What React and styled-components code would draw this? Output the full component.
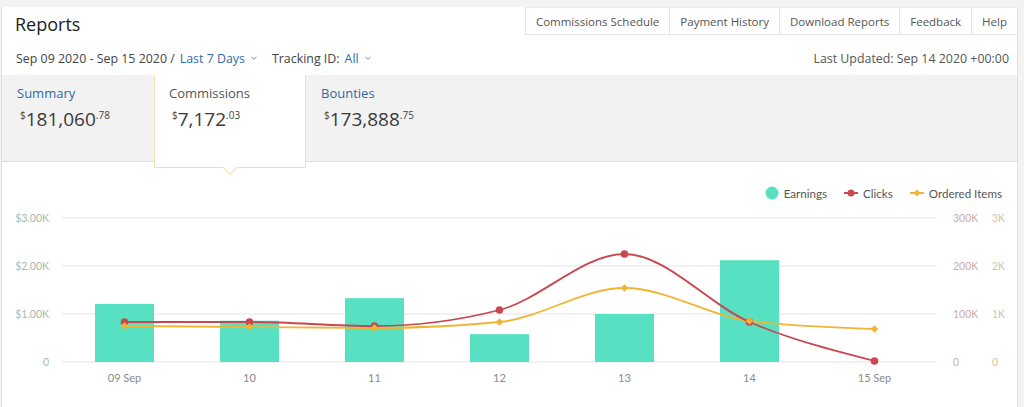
import React from 'react';
import styled, { createGlobalStyle } from 'styled-components';

const GlobalStyle = createGlobalStyle`
  body {
    margin: 0;
    background: #f3f3f3;
    font-family: "Open Sans", "Noto Sans", Arial, sans-serif;
    color: #333;
  }
`;

const Card = styled.div`
  margin: 7px 6px 0 1px;
  background: #fff;
  border-left: 1px solid #e0e0e0;
  border-right: 1px solid #e0e0e0;
  min-height: 400px;
`;

const Header = styled.div`
  display: flex;
  justify-content: space-between;
  align-items: flex-start;
  height: 28px;
`;

const Title = styled.h1`
  margin: 0;
  padding: 5px 0 0 13px;
  font-size: 18px;
  font-weight: 400;
  line-height: 24px;
  color: #222;
`;

const Nav = styled.nav`
  display: flex;
  height: 28px;
`;

const NavItem = styled.div`
  display: flex;
  align-items: center;
  padding: 0 10px;
  font-size: 11.5px;
  color: #555;
  border-left: 1px solid #e3e3e3;
  border-bottom: 1px solid #e3e3e3;
  border-top: 1px solid #ececec;
  white-space: nowrap;
`;

const SubBar = styled.div`
  display: flex;
  justify-content: space-between;
  align-items: center;
  box-sizing: border-box;
  height: 40px;
  padding: 6px 8px 0 14px;
  font-size: 12.4px;
  color: #444;
`;

const Filters = styled.div`
  display: flex;
  align-items: center;
  gap: 14px;
`;

const Filter = styled.span`
  display: inline-flex;
  align-items: center;
  gap: 5px;
`;

const Link = styled.span`
  color: #2f6aa6;
`;

const Updated = styled.span`
  color: #555;
`;

const StatsBand = styled.div`
  display: flex;
  height: 86px;
  background: #f2f2f2;
  border-bottom: 1px solid #dedede;
`;

const StatTab = styled.div`
  position: relative;
  box-sizing: border-box;
  width: 152px;
  padding: 9px 0 0 14px;
  align-self: flex-start;
  height: ${(p) => (p.$active ? '93px' : '86px')};
  background: ${(p) => (p.$active ? '#fff' : 'transparent')};
  border-left: 1px solid ${(p) => (p.$active ? '#f2dfb4' : 'transparent')};
  border-right: 1px solid ${(p) => (p.$active ? '#f2dfb4' : 'transparent')};
  border-bottom: 1px solid ${(p) => (p.$active ? '#f2dfb4' : 'transparent')};
  z-index: ${(p) => (p.$active ? 2 : 0)};

  &::after {
    content: '';
    display: ${(p) => (p.$active ? 'block' : 'none')};
    position: absolute;
    left: 70px;
    bottom: -6px;
    width: 9px;
    height: 9px;
    background: #fff;
    border-right: 1px solid #f2dfb4;
    border-bottom: 1px solid #f2dfb4;
    transform: rotate(45deg);
  }
`;

const StatLabel = styled.div`
  font-size: 13px;
  line-height: 18px;
  color: ${(p) => (p.$active ? '#555' : '#2f6aa6')};
`;

const Amount = styled.div`
  margin: 5px 0 0 3px;
  font-size: 19px;
  line-height: 24px;
  color: #3a3a3a;

  sup {
    font-size: 10px;
    vertical-align: 7px;
    line-height: 0;
    color: #444;
  }
`;

const ChartSection = styled.div`
  padding-top: 24px;
`;

const Legend = styled.div`
  display: flex;
  justify-content: flex-end;
  align-items: center;
  gap: 17px;
  height: 14px;
  padding-right: 15px;
  font-family: Lato, "Open Sans", sans-serif;
  font-size: 11.6px;
  color: #555;
`;

const LegendItem = styled.span`
  display: inline-flex;
  align-items: center;
  gap: 5px;
`;

const Chart = styled.svg`
  display: block;
  margin-top: 5px;
`;

const Chevron = () => (
  <svg width="8" height="6" viewBox="0 0 8 6">
    <path d="M1.5 1.8 L4 4.3 L6.5 1.8" fill="none" stroke="#888" strokeWidth="1" />
  </svg>
);

const TEAL = '#57e0c2';
const RED = '#c9484f';
const YELLOW = '#f0b535';

const xs = [124.5, 249.5, 374.5, 499.5, 624.5, 749.5, 874.5];
const xLabels = ['09 Sep', '10', '11', '12', '13', '14', '15 Sep'];
const earnings = [1.21, 0.86, 1.33, 0.58, 1.0, 2.12, 0];
const clicks = [322, 322, 326, 310, 254, 322, 361];
const items = [326, 327, 328, 322, 288, 321, 329];
const grid = [218, 266, 314, 362];

// monotone-x curve, like d3.curveMonotoneX
function monotonePath(px, py) {
  const n = px.length;
  const sign = (v) => (v < 0 ? -1 : 1);
  const t = new Array(n).fill(0);
  for (let i = 1; i < n - 1; i++) {
    const h0 = px[i] - px[i - 1];
    const h1 = px[i + 1] - px[i];
    const s0 = (py[i] - py[i - 1]) / h0;
    const s1 = (py[i + 1] - py[i]) / h1;
    const p = (s0 * h1 + s1 * h0) / (h0 + h1);
    t[i] = (sign(s0) + sign(s1)) * Math.min(Math.abs(s0), Math.abs(s1), 0.5 * Math.abs(p)) || 0;
  }
  const h0 = px[1] - px[0];
  t[0] = (3 * (py[1] - py[0]) / h0 - t[1]) / 2;
  const hn = px[n - 1] - px[n - 2];
  t[n - 1] = (3 * (py[n - 1] - py[n - 2]) / hn - t[n - 2]) / 2;
  let d = `M${px[0]},${py[0]}`;
  for (let i = 0; i < n - 1; i++) {
    const dx = (px[i + 1] - px[i]) / 3;
    d += ` C${px[i] + dx},${py[i] + dx * t[i]} ${px[i + 1] - dx},${py[i + 1] - dx * t[i + 1]} ${px[i + 1]},${py[i + 1]}`;
  }
  return d;
}

const Diamond = ({ x, y, r }) => (
  <path d={`M${x},${y - r} L${x + r},${y} L${x},${y + r} L${x - r},${y} Z`} fill={YELLOW} />
);

function ReportChart() {
  const leftLabels = ['$3.00K', '$2.00K', '$1.00K', '0'];
  const clickLabels = ['300K', '200K', '100K', '0'];
  const itemLabels = ['3K', '2K', '1K', '0'];
  return (
    <Chart width="1015" height="202" viewBox="2 205 1015 202">
      {grid.map((y) => (
        <line key={y} x1="62" x2="937" y1={y} y2={y} stroke="#e4e4e4" strokeWidth="1" />
      ))}
      <g fontFamily="Lato, 'Open Sans', sans-serif" fontSize="10.5">
        {grid.map((y, i) => (
          <text key={'l' + y} x="49" y={y + 4} textAnchor="end" fill="#a3bbb1">{leftLabels[i]}</text>
        ))}
        {grid.map((y, i) => (
          <text key={'c' + y} x="953" y={y + 4} fill="#c9adab">{clickLabels[i]}</text>
        ))}
        {grid.map((y, i) => (
          <text key={'i' + y} x="992" y={y + 4} fill="#d3c3a4">{itemLabels[i]}</text>
        ))}
        {xs.map((x, i) => (
          <text key={'x' + i} x={x} y="382" textAnchor="middle" fill="#8a8a8a" fontSize="11">{xLabels[i]}</text>
        ))}
      </g>
      {xs.map((x, i) =>
        earnings[i] > 0 ? (
          <rect key={'b' + i} x={x - 29.5} width="59" y={362 - earnings[i] * 48} height={earnings[i] * 48} fill={TEAL} />
        ) : null
      )}
      <path d={monotonePath(xs, items)} fill="none" stroke={YELLOW} strokeWidth="1.8" />
      <path d={monotonePath(xs, clicks)} fill="none" stroke={RED} strokeWidth="1.8" />
      {xs.map((x, i) => (
        <circle key={'r' + i} cx={x} cy={clicks[i]} r="3.8" fill={RED} />
      ))}
      {xs.map((x, i) => (
        <Diamond key={'d' + i} x={x} y={items[i]} r={3.8} />
      ))}
    </Chart>
  );
}

const stats = [
  { label: 'Summary', whole: '181,060', cents: '78' },
  { label: 'Commissions', whole: '7,172', cents: '03', active: true },
  { label: 'Bounties', whole: '173,888', cents: '75' },
];

const navItems = ['Commissions Schedule', 'Payment History', 'Download Reports', 'Feedback', 'Help'];

export default function App() {
  return (
    <>
      <GlobalStyle />
      <Card>
        <Header>
          <Title>Reports</Title>
          <Nav>
            {navItems.map((n) => (
              <NavItem key={n}>{n}</NavItem>
            ))}
          </Nav>
        </Header>
        <SubBar>
          <Filters>
            <Filter>
              Sep 09 2020 - Sep 15 2020 / <Link>Last 7 Days</Link> <Chevron />
            </Filter>
            <Filter>
              Tracking ID: <Link>All</Link> <Chevron />
            </Filter>
          </Filters>
          <Updated>Last Updated: Sep 14 2020 +00:00</Updated>
        </SubBar>
        <StatsBand>
          {stats.map((s) => (
            <StatTab key={s.label} $active={s.active}>
              <StatLabel $active={s.active}>{s.label}</StatLabel>
              <Amount>
                <sup>$</sup>
                {s.whole}
                <sup>.{s.cents}</sup>
              </Amount>
            </StatTab>
          ))}
        </StatsBand>
        <ChartSection>
          <Legend>
            <LegendItem>
              <svg width="14" height="14" viewBox="0 0 14 14">
                <circle cx="7" cy="7" r="6.5" fill={TEAL} />
              </svg>
              Earnings
            </LegendItem>
            <LegendItem>
              <svg width="14" height="10" viewBox="0 0 14 10">
                <line x1="0" x2="14" y1="5" y2="5" stroke={RED} strokeWidth="2" />
                <circle cx="7" cy="5" r="3.5" fill={RED} />
              </svg>
              Clicks
            </LegendItem>
            <LegendItem>
              <svg width="14" height="10" viewBox="0 0 14 10">
                <line x1="0" x2="14" y1="5" y2="5" stroke={YELLOW} strokeWidth="2" />
                <path d="M7 1.5 L10.5 5 L7 8.5 L3.5 5 Z" fill={YELLOW} />
              </svg>
              Ordered Items
            </LegendItem>
          </Legend>
          <ReportChart />
        </ChartSection>
      </Card>
    </>
  );
}
